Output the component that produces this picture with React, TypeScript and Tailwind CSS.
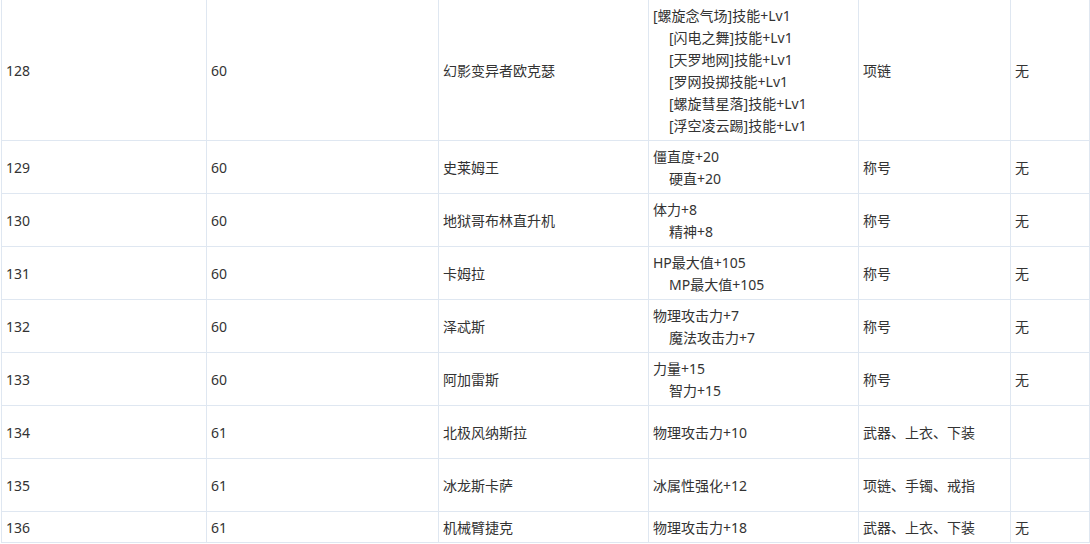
import React from "react";

type Row = {
  id: string;
  lv: string;
  name: string;
  effect: string[];
  slot: string;
  extra: string;
  h: string;
};

const rows: Row[] = [
  {
    id: "128",
    lv: "60",
    name: "幻影变异者欧克瑟",
    effect: [
      "[螺旋念气场]技能+Lv1",
      "[闪电之舞]技能+Lv1",
      "[天罗地网]技能+Lv1",
      "[罗网投掷技能+Lv1",
      "[螺旋彗星落]技能+Lv1",
      "[浮空凌云踢]技能+Lv1",
    ],
    slot: "项链",
    extra: "无",
    h: "h-[141px]",
  },
  { id: "129", lv: "60", name: "史莱姆王", effect: ["僵直度+20", "硬直+20"], slot: "称号", extra: "无", h: "h-[53px]" },
  { id: "130", lv: "60", name: "地狱哥布林直升机", effect: ["体力+8", "精神+8"], slot: "称号", extra: "无", h: "h-[53px]" },
  { id: "131", lv: "60", name: "卡姆拉", effect: ["HP最大值+105", "MP最大值+105"], slot: "称号", extra: "无", h: "h-[53px]" },
  { id: "132", lv: "60", name: "泽忒斯", effect: ["物理攻击力+7", "魔法攻击力+7"], slot: "称号", extra: "无", h: "h-[53px]" },
  { id: "133", lv: "60", name: "阿加雷斯", effect: ["力量+15", "智力+15"], slot: "称号", extra: "无", h: "h-[53px]" },
  { id: "134", lv: "61", name: "北极风纳斯拉", effect: ["物理攻击力+10"], slot: "武器、上衣、下装", extra: "", h: "h-[53px]" },
  { id: "135", lv: "61", name: "冰龙斯卡萨", effect: ["冰属性强化+12"], slot: "项链、手镯、戒指", extra: "", h: "h-[53px]" },
  { id: "136", lv: "61", name: "机械臂捷克", effect: ["物理攻击力+18"], slot: "武器、上衣、下装", extra: "无", h: "h-[31px]" },
];

const cell = "flex flex-col justify-center border-r border-b border-[#dfe7f1] pl-[4px] pt-[2px]";

export default function App() {
  return (
    <div
      className="w-[1090px] h-[544px] overflow-hidden bg-white text-[14px] leading-[22px] text-[#333333]"
      style={{ fontFamily: '"Noto Sans", "Noto Sans CJK SC", sans-serif' }}
    >
      <div className="ml-px -mt-px w-[1089px] border-l border-t border-[#dfe7f1] flex flex-col">
        {rows.map((r) => (
          <div key={r.id} className={`flex ${r.h}`}>
            <div className={`${cell} w-[205px]`}>{r.id}</div>
            <div className={`${cell} w-[232px]`}>{r.lv}</div>
            <div className={`${cell} w-[210px]`}>{r.name}</div>
            <div className={`${cell} w-[210px]`}>
              {r.effect.map((e, i) => (
                <div key={i} className={i === 0 ? "" : "pl-4"}>
                  {e}
                </div>
              ))}
            </div>
            <div className={`${cell} w-[152px]`}>{r.slot}</div>
            <div className={`${cell} w-[79px]`}>{r.extra}</div>
          </div>
        ))}
      </div>
    </div>
  );
}
